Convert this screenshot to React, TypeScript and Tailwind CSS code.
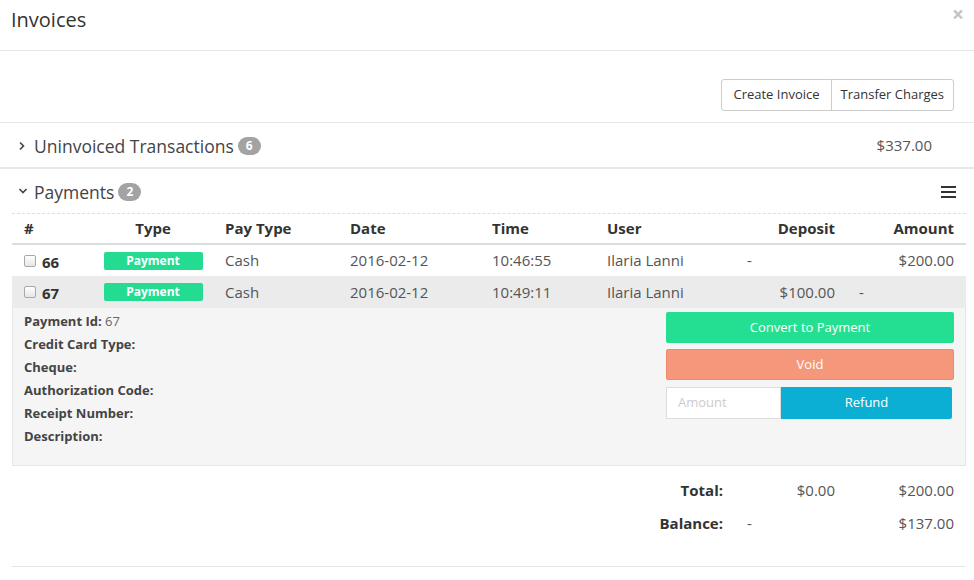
import React from 'react'

const cols = 'grid grid-cols-[80px_122px_124px_142px_115px_140px_112px_119px]'

const Badge = ({ n }: { n: number }) => (
  <span className="ml-[4px] mt-[2px] inline-flex h-[18px] min-w-[23px] items-center justify-center rounded-[9px] bg-[#a3a3a3] px-[7px] text-[12px] font-bold leading-none text-white">
    {n}
  </span>
)

const Check = () => (
  <span className="inline-block h-[12px] w-[12px] rounded-[2px] border border-[#a8a8a8] bg-gradient-to-b from-white to-[#e6e6e6]" />
)

const PayBadge = () => (
  <span className="flex h-[18px] w-[99px] items-center justify-center rounded-[2px] bg-[#23dc91] text-[12px] font-bold text-white">
    Payment
  </span>
)

const rows = [
  { id: '66', time: '10:46:55', deposit: '-', depRight: false, amount: '$200.00', amtRight: true, bg: 'bg-white' },
  { id: '67', time: '10:49:11', deposit: '$100.00', depRight: true, amount: '-', amtRight: false, bg: 'bg-[#ebebeb]' },
]

const details = ['Credit Card Type:', 'Cheque:', 'Authorization Code:', 'Receipt Number:', 'Description:']

export default function App() {
  return (
    <div className="w-[974px] h-[580px] bg-white text-[15px] text-[#555] [font-family:'Open_Sans',sans-serif]">
      {/* header */}
      <div className="flex h-[51px] items-start justify-between border-b border-[#e5e5e5] pl-[11px] pr-[10px]">
        <h1 className="pt-[5px] text-[20px] leading-[30px] text-[#333]">Invoices</h1>
        <span className="pt-[2px] text-[21px] font-bold leading-[24px] text-[#c4c4c4]">×</span>
      </div>

      <div className="flex h-[72px] items-start justify-end border-b border-[#e8e8e8] pr-[20px] pt-[28px]">
        <div className="flex h-[32px] text-[13px] text-[#333]">
          <button className="rounded-l-[3px] border border-[#ccc] px-[11px]">Create Invoice</button>
          <button className="-ml-px rounded-r-[3px] border border-[#ccc] px-[9px]">Transfer Charges</button>
        </div>
      </div>

      {/* uninvoiced */}
      <div className="flex h-[46px] items-center border-b-2 border-[#e8e8e8] pl-[18px] pr-[42px]">
        <svg width="8" height="10" viewBox="0 0 8 10" className="mr-[8px] mt-[1px]">
          <path d="M2 1.5 L5.5 5 L2 8.5" stroke="#444" strokeWidth="1.6" fill="none" />
        </svg>
        <span className="mt-[2px] text-[17.5px] text-[#444]">Uninvoiced Transactions</span>
        <Badge n={6} />
        <span className="ml-auto text-[#555]">$337.00</span>
      </div>

      {/* payments */}
      <div className="ml-[12px] w-[954px]">
        <div className="flex h-[45px] items-center border-b border-dashed border-[#dedede] pl-[6px]">
          <svg width="10" height="8" viewBox="0 0 10 8" className="mr-[6px] mt-[-1px]">
            <path d="M1.5 2 L5 5.5 L8.5 2" stroke="#444" strokeWidth="1.6" fill="none" />
          </svg>
          <span className="mt-[2px] text-[17.5px] text-[#444]">Payments</span>
          <Badge n={2} />
          <div className="ml-auto mr-[10px] mt-[1px] flex w-[15px] flex-col gap-[3px]">
            <span className="h-[2px] bg-[#333]" />
            <span className="h-[2px] bg-[#333]" />
            <span className="h-[2px] bg-[#333]" />
          </div>
        </div>

        {/* table head */}
        <div className={`${cols} h-[31px] items-center border-b-2 border-[#ddd] font-bold text-[#333]`}>
          <span className="px-[12px]">#</span>
          <span className="text-center">Type</span>
          <span className="px-[11px]">Pay Type</span>
          <span className="px-[12px]">Date</span>
          <span className="px-[12px]">Time</span>
          <span className="px-[12px]">User</span>
          <span className="px-[12px] text-right">Deposit</span>
          <span className="px-[12px] text-right">Amount</span>
        </div>

        {rows.map((r, i) => (
          <div key={r.id} className={`${cols} ${i === 0 ? 'h-[31px]' : 'h-[32px]'} items-center ${r.bg}`}>
            <span className="flex items-center gap-[6px] px-[12px]">
              <Check />
              <span className="mt-[3px] text-[15px] font-bold text-[#333]">{r.id}</span>
            </span>
            <span className="flex justify-center">
              <PayBadge />
            </span>
            <span className="px-[11px]">Cash</span>
            <span className="px-[12px]">2016-02-12</span>
            <span className="px-[12px]">{r.time}</span>
            <span className="px-[12px]">Ilaria Lanni</span>
            <span className={`px-[12px] ${r.depRight ? 'text-right' : ''}`}>{r.deposit}</span>
            <span className={`px-[12px] ${r.amtRight ? 'text-right' : ''}`}>{r.amount}</span>
          </div>
        ))}

        {/* detail panel */}
        <div className="flex h-[158px] justify-between border border-t-0 border-[#e6e6e6] bg-[#f5f5f5] pl-[11px] pr-[11px] pt-[2px]">
          <div className="text-[13px] font-bold leading-[23px] text-[#444]">
            <div>
              Payment Id: <span className="font-normal text-[#666]">67</span>
            </div>
            {details.map(d => (
              <div key={d}>{d}</div>
            ))}
          </div>
          <div className="mt-[2px] flex w-[288px] flex-col gap-[6px] text-[13px] font-medium text-white">
            <button className="h-[31px] rounded-[2px] bg-[#24df91]">Convert to Payment</button>
            <button className="h-[31px] rounded-[2px] border border-[#f08a6c] bg-[#f5977a]">Void</button>
            <div className="mt-[1px] flex h-[32px] w-[286px]">
              <input
                placeholder="Amount"
                className="w-[115px] border border-[#ddd] bg-white px-[11px] text-[13px] font-normal text-[#555] outline-none placeholder:text-[#ccc]"
              />
              <button className="flex-1 rounded-r-[2px] bg-[#0bafd3]">Refund</button>
            </div>
          </div>
        </div>

        {/* totals */}
        <div className="border-b border-[#e5e5e5] pb-[26px] pt-[8px]">
          <div className={`${cols} h-[33px] items-center`}>
            <span className="col-span-6 px-[12px] text-right font-bold text-[#333]">Total:</span>
            <span className="px-[12px] text-right">$0.00</span>
            <span className="px-[12px] text-right">$200.00</span>
          </div>
          <div className={`${cols} h-[33px] items-center`}>
            <span className="col-span-6 px-[12px] text-right font-bold text-[#333]">Balance:</span>
            <span className="px-[12px]">-</span>
            <span className="px-[12px] text-right">$137.00</span>
          </div>
        </div>
      </div>
    </div>
  )
}
